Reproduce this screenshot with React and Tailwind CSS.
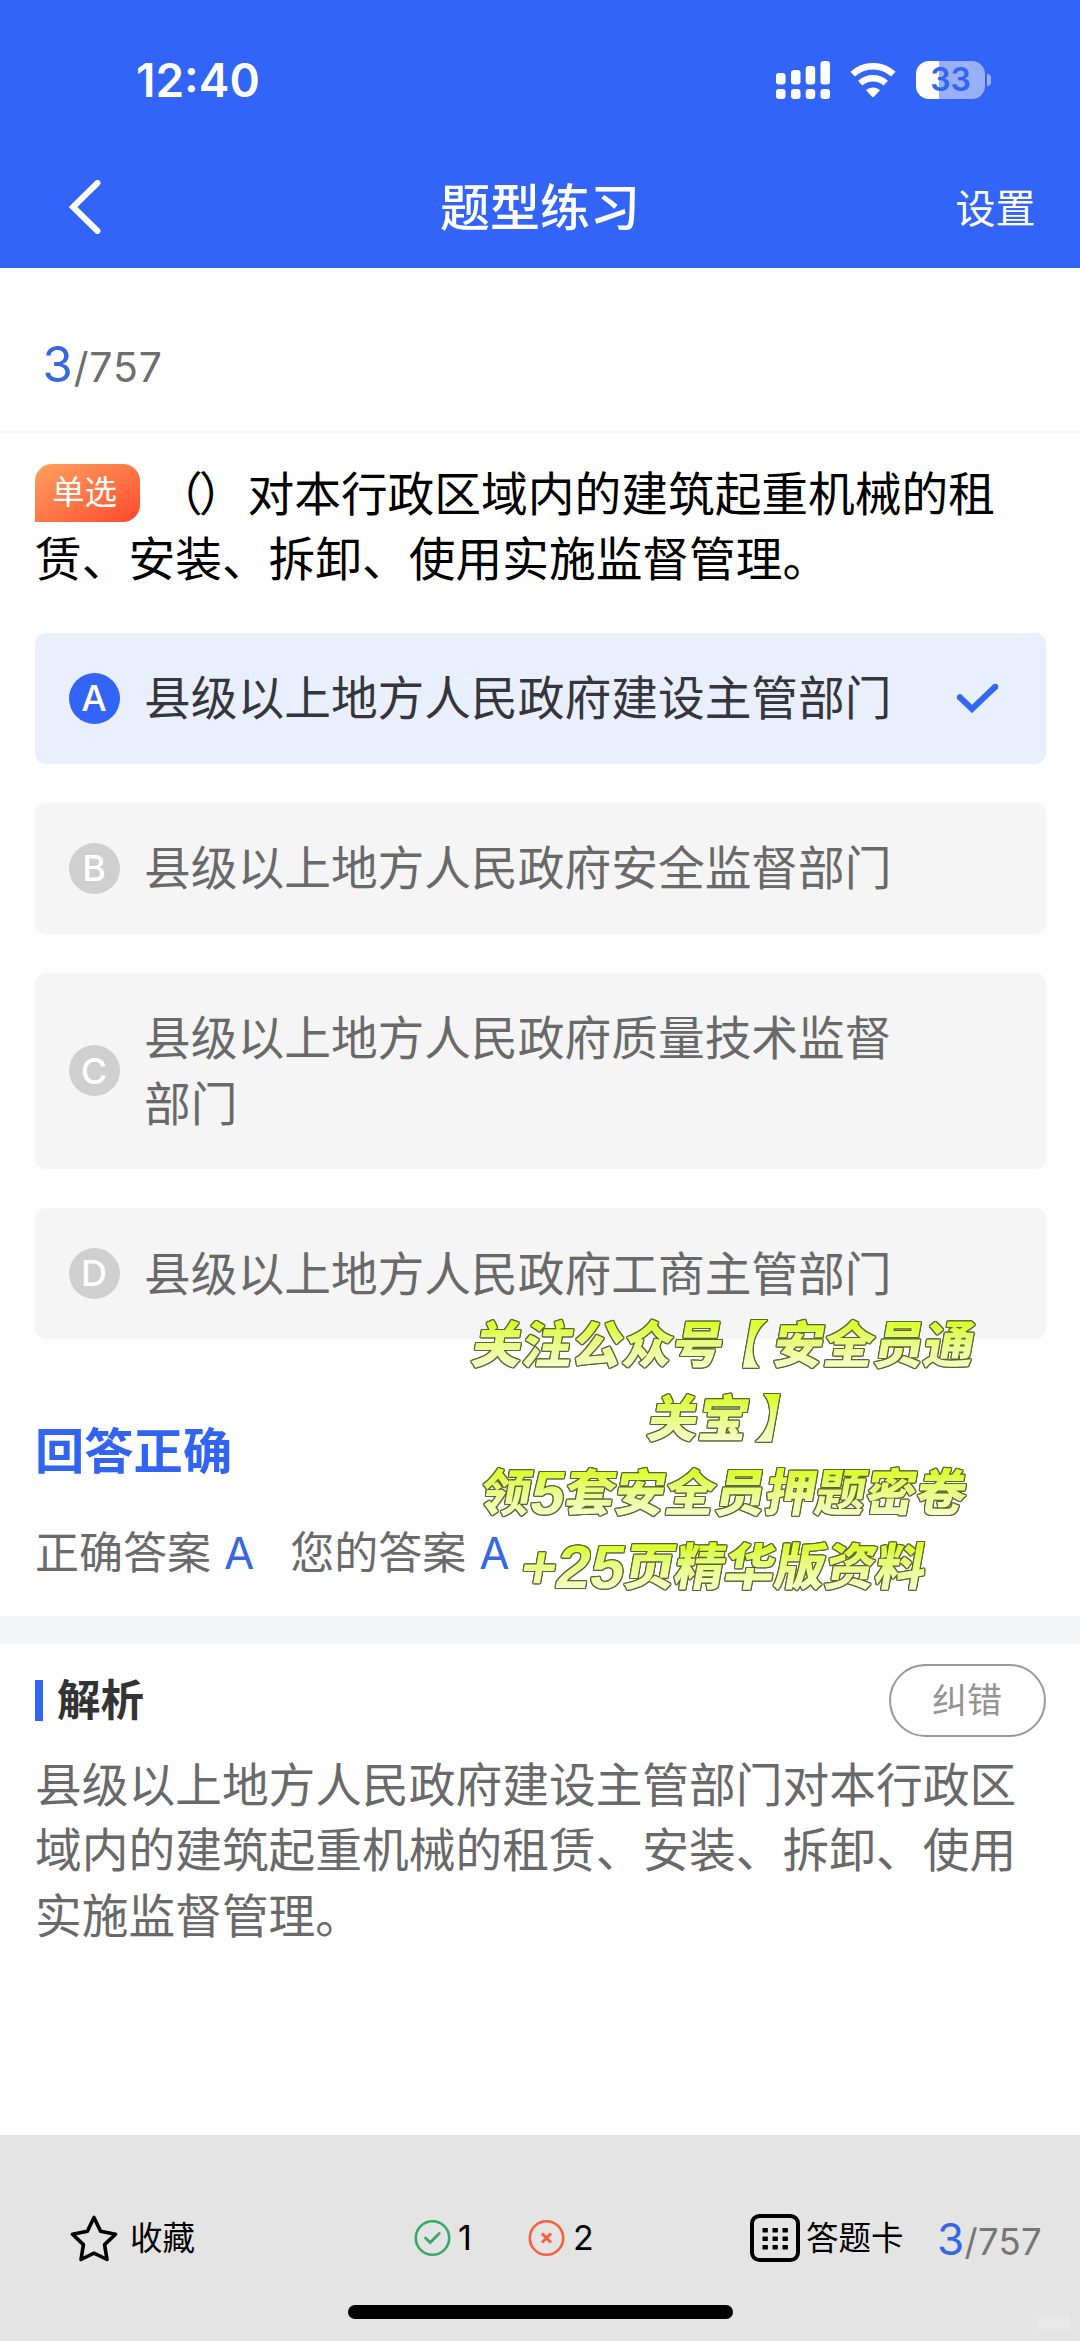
import clsx from 'clsx'

const options = [
  { key: 'A', text: '县级以上地方人民政府建设主管部门', selected: true },
  { key: 'B', text: '县级以上地方人民政府安全监督部门' },
  { key: 'C', text: '县级以上地方人民政府质量技术监督部门' },
  { key: 'D', text: '县级以上地方人民政府工商主管部门' },
]

const SignalIcon = () => (
  <svg width="54" height="38" viewBox="0 0 54 38" fill="#fff">
    <rect x="0" y="12" width="9.5" height="11.5" rx="3" />
    <rect x="15" y="9" width="9.5" height="14.5" rx="3" />
    <rect x="29.7" y="5" width="9.5" height="18.5" rx="3" />
    <rect x="44.5" y="0" width="9.5" height="23.5" rx="3" />
    <rect x="0" y="28" width="9.5" height="10" rx="3" />
    <rect x="15" y="28" width="9.5" height="10" rx="3" />
    <rect x="29.7" y="28" width="9.5" height="10" rx="3" />
    <rect x="44.5" y="28" width="9.5" height="10" rx="3" />
  </svg>
)

const WifiIcon = () => (
  <svg width="46" height="35" viewBox="0 0 46 35" fill="none">
    <path d="M2.7 11.2C14 0.6 32 0.6 43.3 11.2" stroke="#fff" strokeWidth="6.6" />
    <path d="M10.2 20.2C17.5 13.6 28.5 13.6 35.8 20.2" stroke="#fff" strokeWidth="6.4" />
    <path d="M16 27.3C20 23.7 26 23.7 30 27.3L24.2 33.6Q23 34.8 21.8 33.6Z" fill="#fff" />
  </svg>
)

const Battery = () => (
  <div className="flex items-center gap-[2px]">
    <div className="flex h-[38px] w-[69px] items-center justify-center rounded-[13px] bg-[linear-gradient(to_right,#fff_33.5%,#98affb_33.5%)]">
      <span className="text-[32px] leading-none font-semibold text-[#3164f7]">33</span>
    </div>
    <div className="h-[12px] w-[4px] rounded-r-full bg-[#98affb]" />
  </div>
)

const Option = ({ item }) => (
  <div
    className={clsx(
      'flex min-h-[131px] items-center rounded-[11px] py-[32.8px] pl-[33.5px]',
      item.selected ? 'bg-[#eaeffe] text-[#34363b]' : 'bg-[#f5f5f5] text-[#696969]'
    )}>
    <div
      className={clsx(
        'flex size-[51px] shrink-0 items-center justify-center rounded-full text-[36px] leading-none font-medium text-white',
        item.selected ? 'bg-[#3164f7]' : 'bg-[#d0cfcf]'
      )}>
      {item.key}
    </div>
    <div className="ml-[24.5px] w-[760px] translate-y-[0.6px] text-[46.72px] leading-[65.33px]">{item.text}</div>
    {item.selected && (
      <svg className="ml-[52px]" width="43" height="30" viewBox="0 0 43 30" fill="none">
        <path d="M3 13.5L16 26L40 3" stroke="#3667f0" strokeWidth="6" />
        <circle cx="3.8" cy="14.2" r="2.9" fill="#3667f0" />
        <circle cx="39.4" cy="3.6" r="2.9" fill="#3667f0" />
      </svg>
    )}
  </div>
)

const PromoLine = ({ children }) => (
  <div className="-skew-x-[10deg]">
    <span className="bg-linear-to-b from-[#dcff32] from-20% to-[#f4ffc4] to-85% bg-clip-text px-2 text-transparent">
      {children}
    </span>
  </div>
)

const PromoNum = ({ children }) => (
  <span className="align-[-3px] font-['Liberation_Sans'] text-[61px] leading-[0] font-bold">{children}</span>
)

export default function App() {
  return (
    <div className="relative flex h-[2341px] w-[1080px] flex-col overflow-hidden bg-[#fefefe] font-['Inter','Noto_Sans_CJK_SC',sans-serif]">
      <header className="h-[268px] bg-[#3164f7] text-white">
        {/* Status bar */}
        <div className="flex h-[144px] items-center justify-between pt-4 pr-[89px] pl-[136px]">
          <span className="text-[46px] leading-none font-semibold">12:40</span>
          <div className="flex items-center gap-[20px]">
            <SignalIcon />
            <WifiIcon />
            <Battery />
          </div>
        </div>
        {/* Nav bar */}
        <div className="grid h-[124px] grid-cols-3 items-center pt-[2px]">
          <svg className="ml-[69px]" width="32" height="54" viewBox="0 0 32 54" fill="none">
            <path d="M28.5 3L4 27L28.5 51" stroke="#fff" strokeWidth="6" strokeLinecap="round" />
          </svg>
          <h1 className="pt-px text-center text-[50px] leading-none font-medium">题型练习</h1>
          <span className="pt-[3px] pr-[44.5px] text-right text-[40px] leading-none">设置</span>
        </div>
      </header>

      <div className="flex h-[165px] items-baseline border-b-2 border-[#f7f7f7] pt-[67px] pl-[42.5px] text-[41px] leading-[60px] tracking-[0.9px] text-[#6e6e6e]">
        <span className="text-[49px] text-[#3667e4]">3</span>/757
      </div>

      <main className="pt-[29px] pr-[34.5px] pl-[35px]">
        <p className="text-[46.72px] leading-[65.33px] text-black">
          <span className="mr-[14px] inline-flex h-[58px] w-[105px] items-center justify-center rounded-[17px] rounded-bl-none bg-linear-to-br from-[#ff9f60] to-[#ff452c] pr-[6px] align-[7.5px] text-[32.5px] leading-none text-white">
            单选
          </span>
          <span className="mr-[6px] ml-[2px] tracking-[-4px]">（）</span>
          对本行政区域内的建筑起重机械的租赁、安装、拆卸、使用实施监督管理。
        </p>
        <div className="mt-[40px] flex flex-col gap-[39px]">
          {options.map((item) => (
            <Option key={item.key} item={item} />
          ))}
        </div>
      </main>

      <section className="px-[35px] pt-[84px]">
        <h2 className="text-[49.3px] leading-[56px] font-semibold text-[#3164f0]">回答正确</h2>
        <div className="mt-[44px] flex h-[60px] items-center text-[44px] text-[#6a6a6a]">
          正确答案<span className="ml-[13px] text-[#3667e4]">A</span>
          <span className="ml-[36px]">您的答案</span>
          <span className="ml-[13px] text-[#3667e4]">A</span>
        </div>
      </section>

      <div className="mt-[33px] h-[28px] shrink-0 bg-[#f3f6f7]" />

      <section className="pt-[20px] pr-[34.5px] pl-[35px]">
        <div className="flex h-[73px] items-center justify-between">
          <h3 className="flex items-center gap-[14px] text-[43.5px] leading-none font-semibold text-[#333]">
            <i className="h-[41px] w-[8px] bg-[#3164f7]" />
            解析
          </h3>
          <button className="h-[73px] w-[157px] rounded-full border-[2.5px] border-[#999] text-[35px] leading-none text-[#949494]">
            纠错
          </button>
        </div>
        <p className="mt-[16px] w-[990px] text-[46.72px] leading-[65.33px] text-[#696969]">
          县级以上地方人民政府建设主管部门对本行政区域内的建筑起重机械的租赁、安装、拆卸、使用实施监督管理。
        </p>
      </section>

      <footer className="mt-auto flex h-[206px] shrink-0 flex-col bg-[#e4e4e4] text-[32.5px] leading-none text-black">
        <div className="flex h-[170px] items-center pt-[36px] pl-[70px]">
          <svg width="48" height="48" viewBox="0 0 48 48" fill="none">
            <path
              d="M24 3.5L30.6 17.2L45.5 20.2L34.6 30.6L37 45.5L24 39.2L11 45.5L13.4 30.6L2.5 20.2L17.4 17.2Z"
              stroke="#000"
              strokeWidth="3.6"
              strokeLinejoin="round"
            />
          </svg>
          <span className="ml-[12px] w-[65px] pt-[2px]">收藏</span>

          <svg className="ml-[219px]" width="37" height="36" viewBox="0 0 37 36" fill="none" stroke="#38a869">
            <circle cx="18.5" cy="18" r="16.7" strokeWidth="2.6" />
            <path d="M11.5 18L16.2 22.5L25.2 13.5" strokeWidth="2.8" strokeLinecap="round" />
          </svg>
          <span className="ml-[7px] w-[22px] text-[34px]">1</span>
          <svg className="ml-[48px]" width="37" height="36" viewBox="0 0 37 36" fill="none" stroke="#f4623f">
            <circle cx="18.5" cy="18" r="16.7" strokeWidth="2.6" />
            <path d="M14 13.5L23 22.5M23 13.5L14 22.5" strokeWidth="3" />
          </svg>
          <span className="ml-[8px] w-[22px] text-[34px]">2</span>

          <svg className="ml-[155px]" width="50" height="48" viewBox="0 0 50 48">
            <rect x="2" y="2" width="46" height="44" rx="7.5" fill="none" stroke="#000" strokeWidth="4" />
            {[14, 22.5, 31].map((y) =>
              [12.5, 22.5, 32.5].map((x) => (
                <rect key={`${x}-${y}`} x={x} y={y} width="5.4" height="4.4" rx="0.6" />
              ))
            )}
          </svg>
          <span className="ml-[6px] w-[98px] pt-[2px]">答题卡</span>
          <span className="ml-[33px] flex items-baseline pt-px text-[36.5px] tracking-[0.3px] text-[#767676]">
            <b className="text-[44px] font-normal text-[#3667e4]">3</b>/757
          </span>
        </div>
        <div className="ml-[348px] h-[14px] w-[385px] rounded-full bg-black" />
      </footer>

      {/* Promo sticker over the answer area */}
      <div className="absolute top-[1308px] left-[464px] w-[520px] text-center text-[50.2px] leading-[74px] font-black [filter:drop-shadow(1px_0_0_#5b6432)_drop-shadow(-1px_0_0_#5b6432)_drop-shadow(0_1px_0_#5b6432)_drop-shadow(0_-1px_0_#5b6432)]">
        <PromoLine>
          关注公众号<span className="mr-[10px] ml-[-10px]">【</span>安全员通
        </PromoLine>
        <PromoLine>
          关宝<span className="mr-[-9px] ml-[9px]">】</span>
        </PromoLine>
        <PromoLine>
          领<PromoNum>5</PromoNum>套安全员押题密卷
        </PromoLine>
        <PromoLine>
          <PromoNum>+25</PromoNum>页精华版资料
        </PromoLine>
      </div>

      {/* Faint smudge in the corner */}
      <div className="absolute top-[2314px] left-[1037px] h-[18px] w-[34px] rounded-md bg-[#e8e8e8] blur-[2px]" />
    </div>
  )
}
